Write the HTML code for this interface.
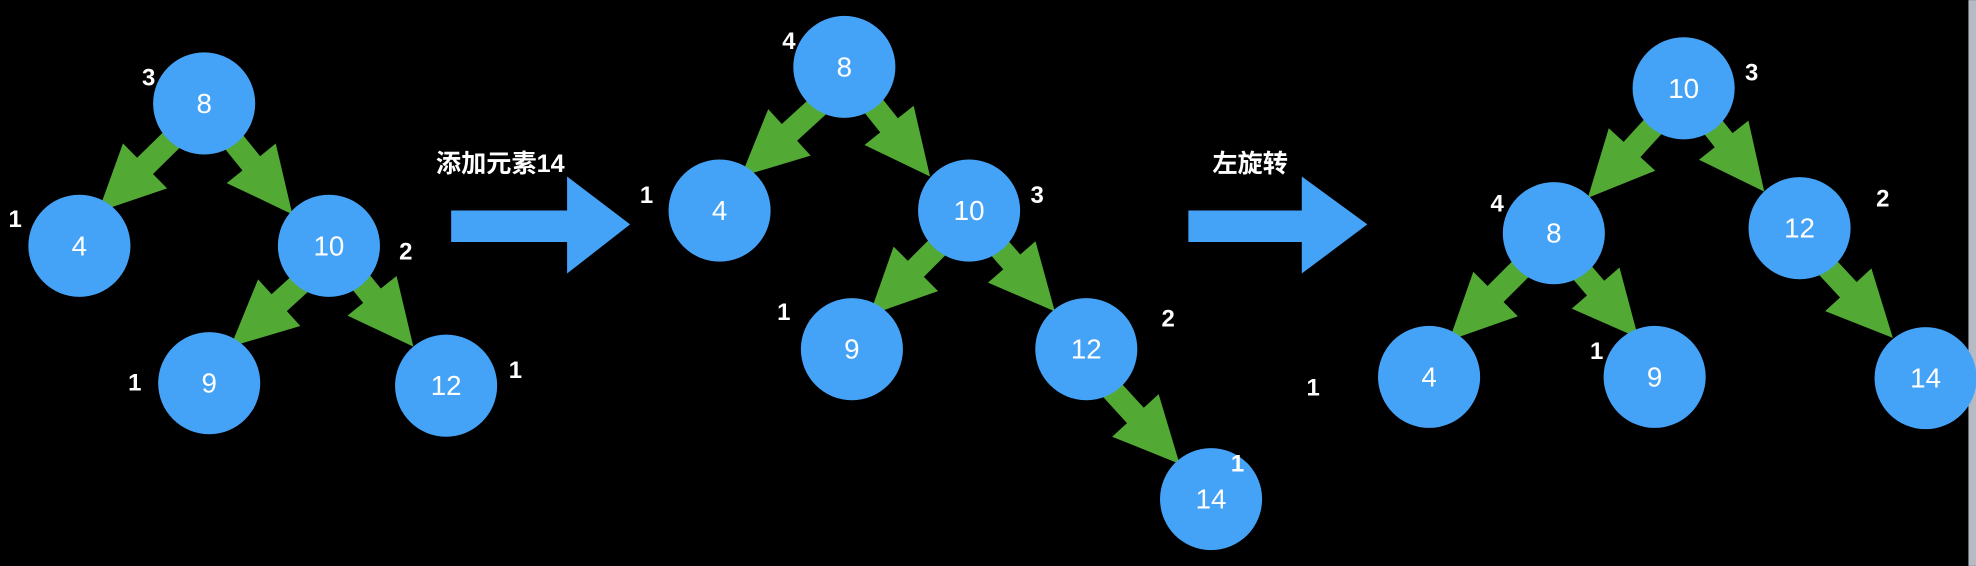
<!DOCTYPE html>
<html><head><meta charset="utf-8"><style>
html,body{margin:0;padding:0;background:#000;width:1976px;height:566px;overflow:hidden}
svg{display:block}
text{font-family:"Liberation Sans","Noto Sans CJK SC",sans-serif;fill:#fff}
.n{font-size:22px;text-anchor:middle;dominant-baseline:central}
.l{font-size:19px;font-weight:bold;text-anchor:middle;dominant-baseline:central}
</style></head><body>
<svg id="s" width="1976" height="566" viewBox="0 0 1568 449" xmlns="http://www.w3.org/2000/svg">
<rect width="1568" height="449" fill="#000"/>
<rect x="1562" y="0" width="6" height="449" fill="#b5bac3"/>
<g id="arrows" fill="#52a934"></g>
<g id="nodes"></g>
<polygon fill="#45a3f7" points="358,167 450,167 450,140 500,178 450,217 450,192 358,192"/>
<polygon fill="#45a3f7" points="943,167 1033,167 1033,140 1085,178 1033,217 1033,192 943,192"/>
<text x="397" y="130" style="font-size:20px;font-weight:bold;text-anchor:middle;dominant-baseline:central">添加元素14</text>
<text x="992" y="130" style="font-size:20px;font-weight:bold;text-anchor:middle;dominant-baseline:central">左旋转</text>
<g>
<text class="l" x="118" y="62">3</text>
<text class="l" x="12" y="174">1</text>
<text class="l" x="322" y="200">2</text>
<text class="l" x="107" y="304">1</text>
<text class="l" x="409" y="294">1</text>
<text class="l" x="626" y="33">4</text>
<text class="l" x="513" y="155">1</text>
<text class="l" x="823" y="155">3</text>
<text class="l" x="622" y="248">1</text>
<text class="l" x="927" y="253">2</text>
<text class="l" x="982" y="368">1</text>
<text class="l" x="1042" y="308">1</text>
<text class="l" x="1390" y="58">3</text>
<text class="l" x="1188" y="162">4</text>
<text class="l" x="1494" y="158">2</text>
<text class="l" x="1267" y="279">1</text>
</g>
</svg>
<script>
var ns="http://www.w3.org/2000/svg";
var nodes=[[162,82,"8"],[63,195,"4"],[261,195,"10"],[166,304,"9"],[354,306,"12"],
[670,53,"8"],[571,167,"4"],[769,167,"10"],[676,277,"9"],[862,277,"12"],[961,396,"14"],
[1336,70,"10"],[1233,185,"8"],[1428,181,"12"],[1134,299,"4"],[1313,299,"9"],[1528,300,"14"]];
var g=document.getElementById("nodes");
nodes.forEach(function(n){
 var c=document.createElementNS(ns,"circle");c.setAttribute("cx",n[0]);c.setAttribute("cy",n[1]);c.setAttribute("r",40.5);c.setAttribute("fill","#45a3f7");g.appendChild(c);
 var t=document.createElementNS(ns,"text");t.setAttribute("x",n[0]);t.setAttribute("y",n[1]);t.setAttribute("class","n");t.textContent=n[2];g.appendChild(t);
});
var arr=[[134,113,78,168],[182,108,232,170],[236,227,183,275],[285,222,328,275],
[645,88,588,140],[690,80,738,140],[745,195,690,250],[790,193,837,247],[883,310,936,368],
[1312,100,1260,157],[1355,95,1400,152],[1205,215,1150,270],[1252,212,1300,268],[1452,214,1502,268]];
var ag=document.getElementById("arrows");
arr.forEach(function(a){
 var dx=a[2]-a[0],dy=a[3]-a[1],L=Math.hypot(dx,dy),ux=dx/L,uy=dy/L,px=-uy,py=ux;
 var sx=a[0]-ux*6,sy=a[1]-uy*6;
 var hl=52,hw=25,sw=9;
 var bx=a[2]-ux*hl,by=a[3]-uy*hl;
 var p=[[sx+px*sw,sy+py*sw],[bx+px*sw,by+py*sw],[bx+px*hw,by+py*hw],[a[2],a[3]],[bx-px*hw,by-py*hw],[bx-px*sw,by-py*sw],[sx-px*sw,sy-py*sw]];
 var pl=document.createElementNS(ns,"polygon");pl.setAttribute("points",p.map(function(q){return q[0].toFixed(1)+","+q[1].toFixed(1)}).join(" "));ag.appendChild(pl);
});
</script>
</body></html>
